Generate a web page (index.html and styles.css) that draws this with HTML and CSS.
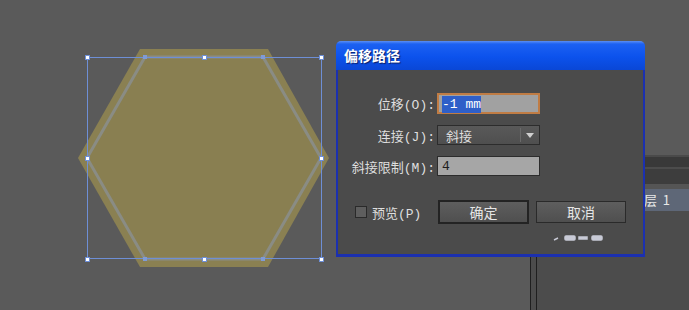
FILE: index.html
```html
<!DOCTYPE html>
<html>
<head>
    <title>偏移路径</title>
    <meta name="viewport" content="width=device-width, initial-scale=1.0">
    <link rel="stylesheet" href="styles.css">
</head>
<body>
    <div class="workspace">
        <!-- artwork on the canvas -->
        <svg class="artwork" width="340" height="310" viewBox="0 0 340 310">
            <polygon class="hex-outer" points="140,49 268,49 329,158 268,267 140,267 78,158"/>
            <polygon class="hex-inner" points="145,57 263,57 321,158 263,259 145,259 87,158"/>
            <rect class="bbox" x="87.5" y="57.5" width="234" height="201"/>
            <g class="anchor">
                <rect x="143" y="55" width="4" height="4"/>
                <rect x="261" y="55" width="4" height="4"/>
                <rect x="143" y="257" width="4" height="4"/>
                <rect x="261" y="257" width="4" height="4"/>
            </g>
            <g class="handle">
                <rect x="85.5" y="55.5" width="4" height="4"/>
                <rect x="202.5" y="55.5" width="4" height="4"/>
                <rect x="319.5" y="55.5" width="4" height="4"/>
                <rect x="85.5" y="156.5" width="4" height="4"/>
                <rect x="319.5" y="156.5" width="4" height="4"/>
                <rect x="85.5" y="257.5" width="4" height="4"/>
                <rect x="202.5" y="257.5" width="4" height="4"/>
                <rect x="319.5" y="257.5" width="4" height="4"/>
            </g>
        </svg>

        <!-- layers panel behind the dialog -->
        <div class="panel">
            <div class="panel-head"></div>
            <div class="panel-tabs"></div>
            <div class="panel-gap"></div>
            <div class="layer-row">图层&nbsp;&nbsp;1</div>
        </div>

        <div class="dialog">
            <div class="dialog-title">偏移路径</div>
            <div class="dialog-body">
                <div class="form-grid">
                    <label class="label">位移(O):</label>
                    <div class="field field-active"><span class="selected">-1 mm</span></div>

                    <label class="label">连接(J):</label>
                    <div class="select">
                        <span class="select-text">斜接</span>
                        <span class="select-arrow"></span>
                    </div>

                    <label class="label">斜接限制(M):</label>
                    <div class="field">4</div>
                </div>

                <div class="actions">
                    <label class="check"><span class="check-box"></span>预览(P)</label>
                    <button class="btn btn-default">确定</button>
                    <button class="btn btn-cancel">取消</button>
                </div>

                <svg class="mark" width="52" height="8" viewBox="0 0 52 8">
                    <path d="M1 6 L5 4" />
                    <rect x="12" y="2" width="10" height="4" rx="1"/>
                    <rect x="26" y="3" width="8" height="2"/>
                    <rect x="39" y="2" width="10" height="4" rx="1"/>
                </svg>
            </div>
        </div>
    </div>
</body>
</html>
```

FILE: styles.css
```css
body {
    margin: 0;
    background-color: #5a5a5a;
    font-family: "Liberation Mono", "Noto Sans CJK SC", monospace;
    font-size: 13px;
    color: #dedede;
}
.workspace {
    position: relative;
    width: 689px;
    height: 310px;
    overflow: hidden;
}
.artwork {
    position: absolute;
    left: 0;
    top: 0;
}
.hex-outer {
    fill: #8a8052;
}
.hex-inner {
    fill: #897f51;
    stroke: #8a8c84;
    stroke-width: 3;
}
.bbox {
    fill: none;
    stroke: #6e8fd6;
    stroke-width: 1;
}
.anchor rect {
    fill: #7f9bd6;
}
.handle rect {
    fill: #ffffff;
    stroke: #6e8fd6;
    stroke-width: 1;
}

/* layers panel */
.panel {
    position: absolute;
    left: 530px;
    top: 155px;
    width: 159px;
    height: 155px;
    background-color: #4c4c4c;
    border-left: 1px solid #1f1f1f;
    box-sizing: border-box;
}
.panel::before {
    content: "";
    position: absolute;
    left: 5px;
    top: 0;
    bottom: 0;
    border-left: 1px solid #1f1f1f;
}
.panel-head {
    height: 2px;
    background-color: #4a4a4a;
    border-bottom: 10px solid #393939;
}
.panel-tabs {
    height: 15px;
    margin-top: 2px;
    background-color: #3d3d3d;
}
.panel-gap {
    height: 5px;
    background-color: #555555;
}
.layer-row {
    height: 22px;
    line-height: 22px;
    padding-left: 100px;
    background-color: #5e6777;
    color: #e8e8e8;
    font-family: "Noto Sans CJK SC", sans-serif;
}

/* dialog */
.dialog {
    position: absolute;
    left: 336px;
    top: 41px;
    width: 309px;
    height: 216px;
    display: flex;
    flex-direction: column;
}
.dialog-title {
    height: 29px;
    line-height: 29px;
    padding-left: 8px;
    border-radius: 5px 5px 0 0;
    background: linear-gradient(#5b8ff4 0, #1c61f2 3px, #0c52ec 55%, #0a47d6 100%);
    color: #ffffff;
    font-family: "Noto Sans CJK SC", sans-serif;
    font-weight: bold;
    font-size: 14px;
    text-shadow: 1px 1px 1px #0a1e66;
}
.dialog-body {
    position: relative;
    flex: 1;
    background-color: #4b4b4b;
    border: 2px solid #1b30b0;
    border-top: none;
    border-bottom-width: 3px;
    padding-top: 23px;
}
.form-grid {
    display: grid;
    grid-template-columns: 97px 103px;
    column-gap: 2px;
    row-gap: 11px;
}
.label {
    text-align: right;
    align-self: center;
    white-space: nowrap;
}
.field {
    height: 20px;
    line-height: 20px;
    padding-left: 4px;
    background-color: #a6a6a6;
    border: 1px solid #2c2c2c;
    box-sizing: border-box;
    color: #1e1e1e;
}
.field-active {
    height: 21px;
    line-height: 19px;
    border: 2px solid #c07c44;
    padding-left: 3px;
    background-color: #a1a1a1;
}
.selected {
    background-color: #2f5fc8;
    color: #ffffff;
    padding: 1px 0;
}
.select {
    display: flex;
    align-items: center;
    height: 20px;
    border: 1px solid #2c2c2c;
    box-sizing: border-box;
    background: linear-gradient(#595959, #4f4f4f);
}
.select-text {
    flex: 1;
    padding-left: 8px;
    font-family: "Noto Sans CJK SC", sans-serif;
}
.select-arrow {
    width: 18px;
    height: 14px;
    border-left: 1px solid #6a6a6a;
    position: relative;
}
.select-arrow::after {
    content: "";
    position: absolute;
    left: 5px;
    top: 5px;
    border-left: 4px solid transparent;
    border-right: 4px solid transparent;
    border-top: 5px solid #d0d0d0;
}

.actions {
    display: flex;
    align-items: center;
    margin-top: 24px;
    padding-left: 17px;
}
.check {
    display: flex;
    align-items: center;
    gap: 5px;
    width: 83px;
}
.check-box {
    width: 10px;
    height: 10px;
    border: 1px solid #2a2a2a;
    background-color: #5e5e5e;
}
.btn {
    font-family: "Noto Sans CJK SC", sans-serif;
    font-size: 14px;
    color: #e6e6e6;
    background: linear-gradient(#5e5e5e, #4f4f4f);
    padding: 0;
    box-sizing: border-box;
}
.btn-default {
    width: 91px;
    height: 24px;
    border: 2px solid #232323;
}
.btn-cancel {
    width: 90px;
    height: 22px;
    margin-left: 7px;
    border: 1px solid #2a2a2a;
}
.mark {
    position: absolute;
    left: 215px;
    bottom: 12px;
    fill: #c8cad6;
    stroke: #c8cad6;
    stroke-width: 1.5;
}
```
